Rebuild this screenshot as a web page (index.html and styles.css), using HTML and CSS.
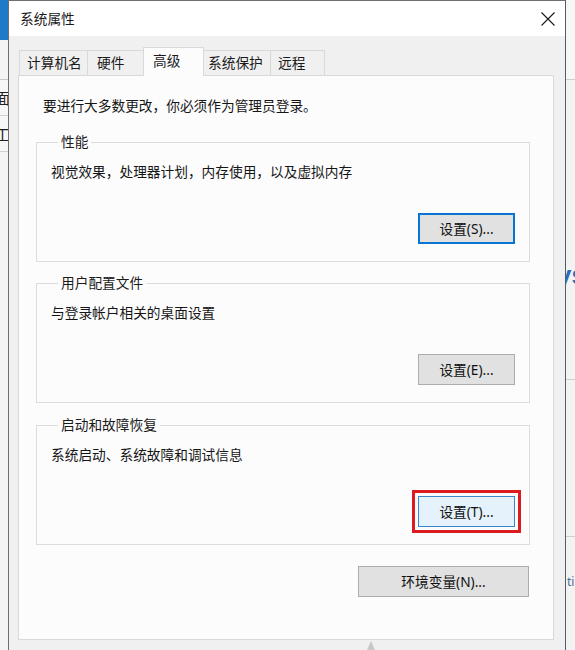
FILE: index.html
```html
<!DOCTYPE html>
<html lang="zh-CN">
<head>
<meta charset="utf-8">
<title>系统属性</title>
<link rel="stylesheet" href="styles.css">
</head>
<body>
<div class="screen">
  <div class="bg-left">
    <div class="bg-left-top"></div>
    <div class="bg-left-gap"></div>
    <div class="bg-left-row"><span class="bg-glyph">面</span></div>
    <div class="bg-left-row"><span class="bg-glyph">工</span></div>
  </div>

  <div class="dialog">
    <div class="titlebar">
      <span class="title">系统属性</span>
      <svg class="close" width="14" height="14" viewBox="0 0 14 14" aria-hidden="true">
        <path d="M0.5 0.5 L13.5 13.5 M13.5 0.5 L0.5 13.5" stroke="#1a1a1a" stroke-width="1.1" fill="none"/>
      </svg>
    </div>

    <div class="body">
      <div class="tabs">
        <div class="tab tab-name">计算机名</div>
        <div class="tab tab-hw">硬件</div>
        <div class="tab tab-adv active">高级</div>
        <div class="tab tab-prot">系统保护</div>
        <div class="tab tab-remote">远程</div>
      </div>

      <div class="panel">
        <p class="notice">要进行大多数更改，你必须作为管理员登录。</p>

        <fieldset class="group">
          <legend>性能</legend>
          <p class="desc">视觉效果，处理器计划，内存使用，以及虚拟内存</p>
          <div class="btn-row"><button class="btn btn-default">设置(S)...</button></div>
        </fieldset>

        <fieldset class="group group-2">
          <legend>用户配置文件</legend>
          <p class="desc">与登录帐户相关的桌面设置</p>
          <div class="btn-row"><button class="btn">设置(E)...</button></div>
        </fieldset>

        <fieldset class="group group-3">
          <legend>启动和故障恢复</legend>
          <p class="desc">系统启动、系统故障和调试信息</p>
          <div class="btn-row"><button class="btn btn-hover btn-marked">设置(T)...</button></div>
        </fieldset>

        <div class="btn-row env-row"><button class="btn btn-wide">环境变量(N)...</button></div>
      </div>
      <div class="footer"><span class="mark"></span></div>
    </div>
  </div>

  <div class="bg-right">
    <div class="bg-right-seg seg-1"></div>
    <div class="bg-right-seg seg-2"><span class="bg-blue">ys</span></div>
    <div class="bg-right-seg seg-3"></div>
    <div class="bg-right-seg seg-4"><span class="bg-small">ti</span></div>
  </div>
</div>
</body>
</html>
```

FILE: styles.css
```css
* {
  box-sizing: border-box;
}

html, body {
  margin: 0;
  padding: 0;
  background: #f0f0f0;
}

body {
  font-family: "Noto Sans", "Noto Sans CJK SC", sans-serif;
  font-size: 13.7px;
  color: #151515;
}

.screen {
  display: flex;
  width: 575px;
  height: 650px;
  overflow: hidden;
}

/* background window slivers */
.bg-left {
  width: 8px;
  flex: none;
  display: flex;
  flex-direction: column;
  background: #f4f4f4;
  overflow: hidden;
}

.bg-left-top {
  height: 40px;
  background: #1f7ac9;
}

.bg-left-gap {
  height: 40px;
  border-bottom: 1px solid #c9c9c9;
}

.bg-left-row {
  height: 36px;
  border-bottom: 1px solid #d0d0d0;
  display: flex;
  align-items: center;
  overflow: hidden;
  background: #f7f7f7;
}

.bg-glyph {
  margin-left: -5px;
  font-size: 15px;
  line-height: 18px;
  color: #222;
}

.bg-right {
  width: 9px;
  flex: none;
  display: flex;
  flex-direction: column;
  background: #f3f3f3;
  overflow: hidden;
}

.bg-right-seg {
  border-bottom: 1px solid #cfcfcf;
  overflow: hidden;
  white-space: nowrap;
}

.seg-1 { height: 80px; background: #f7f7f7; }
.seg-2 { height: 300px; padding-top: 182px; }
.seg-3 { height: 157px; }
.seg-4 { flex: 1; padding-top: 38px; border-bottom: none; }

.bg-blue {
  display: block;
  margin-left: -9px;
  font-family: "Liberation Sans", sans-serif;
  font-size: 26px;
  line-height: 26px;
  font-weight: bold;
  color: #2a6cb5;
}

.bg-small {
  display: block;
  margin-left: 1px;
  font-size: 12px;
  line-height: 14px;
  color: #4b6d97;
}

/* dialog */
.dialog {
  width: 558px;
  flex: none;
  display: flex;
  flex-direction: column;
  border-left: 1px solid #6f6f6f;
  border-right: 1px solid #4f5d6d;
  border-top: 1px solid #707070;
  background: #f0f0f0;
}

.titlebar {
  height: 35px;
  flex: none;
  background: #ffffff;
  display: flex;
  align-items: center;
  justify-content: space-between;
  padding-left: 11px;
  padding-right: 10px;
}

.title {
  line-height: 20px;
  color: #1a1a1a;
}

.close {
  display: block;
}

.body {
  flex: 1;
  display: flex;
  flex-direction: column;
  padding: 11px 11px 0 9px;
}

/* tabs */
.tabs {
  display: flex;
  align-items: flex-end;
  padding-left: 1px;
  height: 28px;
  position: relative;
  z-index: 1;
}

.tab {
  height: 25px;
  line-height: 23px;
  padding-top: 0;
  background: #f0f0f0;
  border: 1px solid #d9d9d9;
  border-bottom: none;
  margin-right: -1px;
  white-space: nowrap;
  color: #1a1a1a;
}

.tab-name { width: 69px; padding-left: 7px; }
.tab-hw { width: 57px; padding-left: 9px; }
.tab-adv { width: 61px; padding-left: 9px; }
.tab-prot { width: 68px; padding-left: 4px; }
.tab-remote { width: 55px; padding-left: 7px; }

.tab.active {
  height: 29px;
  line-height: 26px;
  margin-bottom: -1px;
  background: #fcfcfd;
  position: relative;
  z-index: 2;
}

/* panel */
.panel {
  height: 565px;
  flex: none;
  background: #fcfcfd;
  border: 1px solid #d9d9d9;
  display: flex;
  flex-direction: column;
}

.notice {
  margin: 20px 0 0 24px;
  line-height: 20px;
}

.group {
  margin: 16px 23px 0 17px;
  padding: 10px 14px 17px 14px;
  border: 1px solid #dcdcdc;
  min-width: 0;
}

.group-2 { margin-top: 11px; }
.group-3 { margin-top: 12px; }

.group legend {
  margin-left: 7px;
  padding: 0 3px;
  line-height: 20px;
  color: #1a1a1a;
}

.desc {
  margin: 0;
  line-height: 20px;
}

.btn-row {
  display: flex;
  justify-content: flex-end;
  margin-top: 31px;
}

.btn {
  width: 97px;
  height: 31px;
  margin: 0;
  padding: 0;
  font-family: inherit;
  font-size: 13.7px;
  color: #111;
  background: #e1e1e1;
  border: 1px solid #adadad;
  line-height: 20px;
}

.btn-default {
  border: 2px solid #0a74d2;
}

.btn-hover {
  background: #e5f1fb;
  border: 1px solid #3c86c8;
}

.btn-marked {
  outline: 3px solid #dc1a1f;
  outline-offset: 3px;
}

.env-row {
  margin: 21px 24px 0 0;
}

.btn-wide {
  width: 171px;
}

.footer {
  flex: 1;
  position: relative;
}

.mark {
  position: absolute;
  left: 349px;
  top: 1px;
  width: 0;
  height: 0;
  border-left: 4px solid transparent;
  border-right: 4px solid transparent;
  border-bottom: 9px solid #c8c8c8;
}
```
